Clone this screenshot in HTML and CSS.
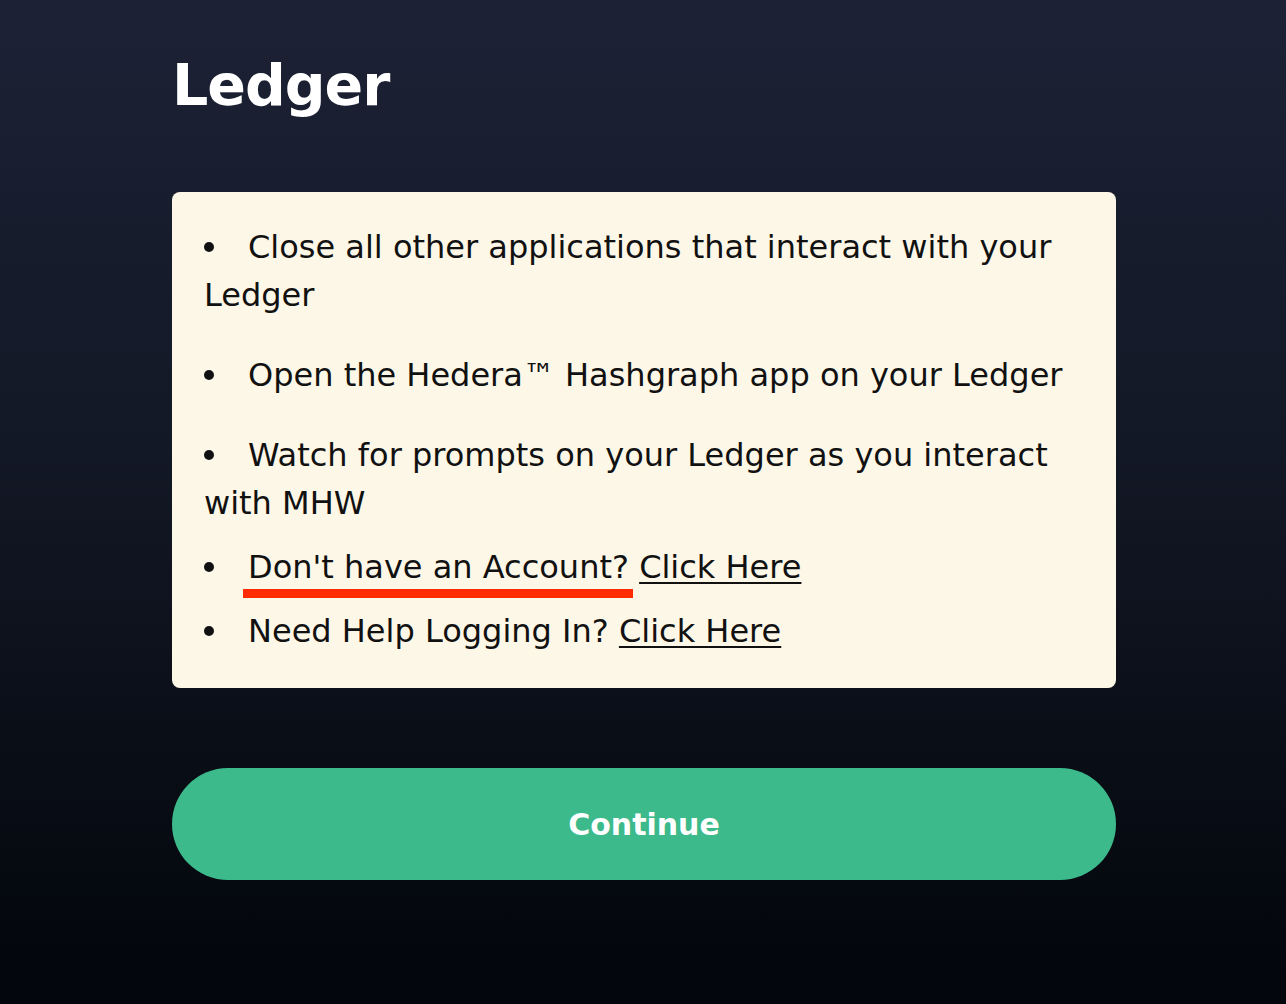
FILE: index.html
```html
<!DOCTYPE html>
<html lang="en">
<head>
<meta charset="utf-8">
<title>Ledger</title>
<link rel="stylesheet" href="styles.css">
</head>
<body>
<main class="page">
  <h1 class="title">Ledger</h1>
  <section class="card">
    <ul class="steps">
      <li class="step step-wide"><span class="dot"></span>Close all other applications that interact with your Ledger</li>
      <li class="step step-wide"><span class="dot"></span>Open the Hedera™ Hashgraph app on your Ledger</li>
      <li class="step step-tight"><span class="dot"></span>Watch for prompts on your Ledger as you interact with MHW</li>
      <li class="step step-tight"><span class="dot"></span><span class="marked">Don't have an Account?</span> <a class="link" href="#">Click Here</a></li>
      <li class="step"><span class="dot"></span>Need Help Logging In? <a class="link" href="#">Click Here</a></li>
    </ul>
  </section>
  <button class="continue" type="button">Continue</button>
</main>
</body>
</html>
```
FILE: styles.css
```css
html, body {
  margin: 0;
  padding: 0;
  height: 100%;
}

body {
  min-height: 1004px;
  background: linear-gradient(180deg, #1c2135 0%, #131826 45%, #02050a 100%);
  font-family: "DejaVu Sans", "Liberation Sans", sans-serif;
}

.page {
  width: 944px;
  margin: 0 0 0 172px;
  padding-top: 51px;
}

.title {
  margin: 0 0 73px 0;
  font-size: 57px;
  line-height: 68px;
  font-weight: 700;
  letter-spacing: -1px;
  color: #ffffff;
}

.card {
  background: #fdf7e7;
  border-radius: 8px;
  padding: 31px 32px 33px 32px;
}

.steps {
  list-style: none;
  margin: 0;
  padding: 0;
  font-size: 32px;
  line-height: 48px;
  color: #111111;
}

.step-wide {
  margin-bottom: 32px;
}

.step-tight {
  margin-bottom: 16px;
}

.dot {
  display: inline-block;
  width: 10px;
  height: 10px;
  border-radius: 50%;
  background: #111111;
  margin-right: 34px;
  vertical-align: 6px;
}

.marked {
  position: relative;
}

.marked::after {
  content: "";
  position: absolute;
  left: -5px;
  right: -4px;
  top: 41px;
  height: 9px;
  background: #ff2b05;
}

.link {
  color: #111111;
  text-decoration: underline;
  text-underline-offset: 4px;
  text-decoration-thickness: 2px;
}

.continue {
  display: block;
  width: 100%;
  height: 112px;
  margin-top: 80px;
  border: none;
  border-radius: 56px;
  background: #3dba8b;
  color: #ffffff;
  font-family: "DejaVu Sans", "Liberation Sans", sans-serif;
  font-weight: 700;
  font-size: 30px;
  cursor: pointer;
}
```
